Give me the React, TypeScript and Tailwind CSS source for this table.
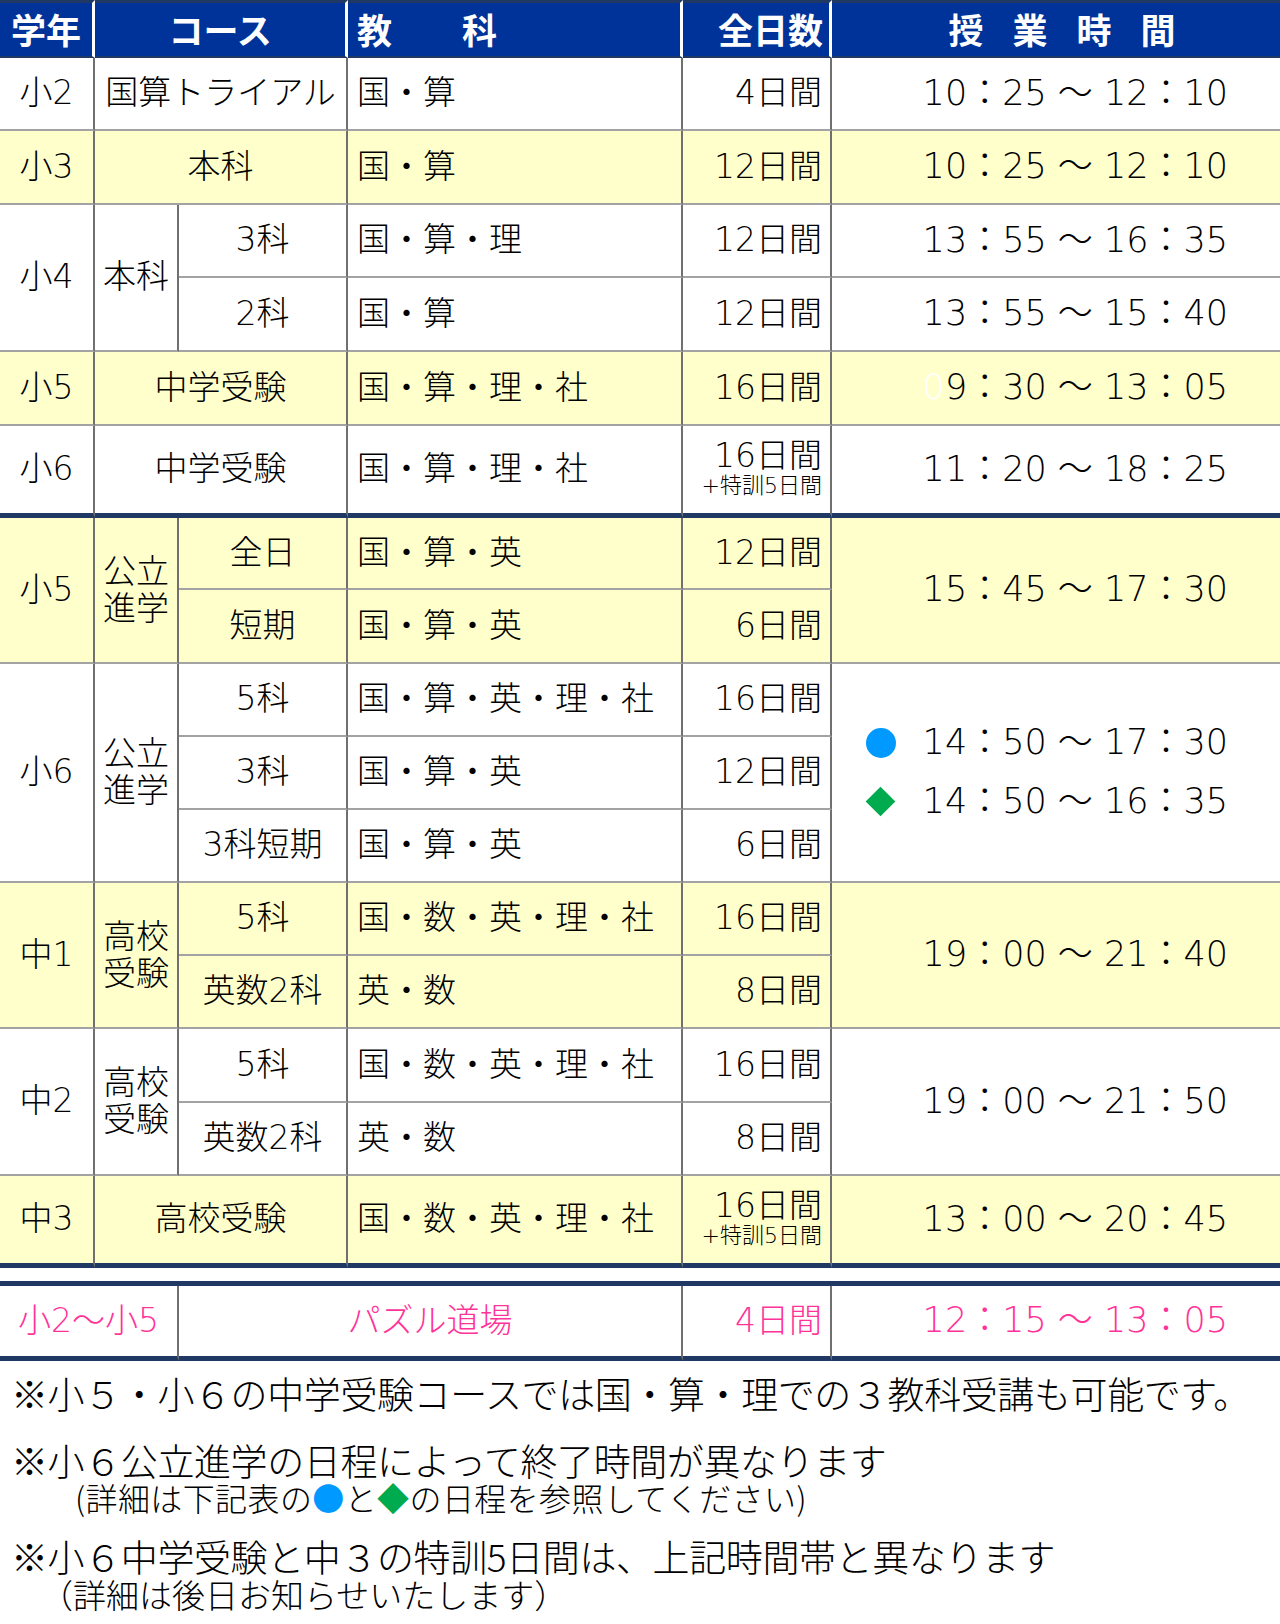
import type { ReactNode } from 'react'

type CellProps = {
  children?: ReactNode
  rowSpan?: number
  colSpan?: number
  align?: 'left' | 'center' | 'right' | 'time'
  last?: boolean
  thick?: boolean
  className?: string
}

function Cell({ children, rowSpan, colSpan, align = 'center', last, thick, className = '' }: CellProps) {
  const alignClass =
    align === 'left'
      ? 'text-left pl-[9px] pr-0'
      : align === 'right'
        ? 'text-right pr-[8px] pl-0'
        : align === 'time'
          ? 'text-right pr-[52px] pl-0'
          : 'text-center px-0'
  const rightClass = last ? '' : 'border-r-2 border-r-[#707070]'
  const bottomClass = thick ? 'border-b-[5px] border-b-[#1f3864]' : 'border-b-2 border-b-[#a3a3a3]'
  return (
    <td
      rowSpan={rowSpan}
      colSpan={colSpan}
      className={`${alignClass} ${rightClass} ${bottomClass} py-0 align-middle whitespace-nowrap ${className}`}
    >
      {children}
    </td>
  )
}

function Time({ text }: { text: string }) {
  return <span className="text-[35px]">{text}</span>
}

function Days({ main, extra }: { main: string; extra?: boolean }) {
  if (!extra) return <>{main}</>
  return (
    <div className="flex flex-col items-end leading-none">
      <span className="leading-[34px]">{main}</span>
      <span className="text-[22px] leading-[26px]">+特訓5日間</span>
    </div>
  )
}

function TwoLine({ a, b }: { a: string; b: string }) {
  return (
    <div className="flex flex-col items-center leading-[37px]">
      <span>{a}</span>
      <span>{b}</span>
    </div>
  )
}

export default function App() {
  const yellow = 'bg-[#ffffcc]'

  return (
    <div className="w-[1280px] h-[1624px] bg-white text-black font-['DejaVu_Sans','Noto_Sans_CJK_JP',sans-serif] font-light text-[33px] overflow-hidden">
      <table className="w-[1280px] table-fixed border-separate border-spacing-0">
        <colgroup>
          <col className="w-[95px]" />
          <col className="w-[84px]" />
          <col className="w-[169px]" />
          <col className="w-[335px]" />
          <col className="w-[149px]" />
          <col className="w-[448px]" />
        </colgroup>
        <thead>
          <tr className="h-[57px] bg-[#003399] text-white font-bold text-[35px] font-['Noto_Sans_CJK_JP',sans-serif]">
            <th className="border-t-[3px] border-t-[#1f3864] border-b-2 border-b-[#1f3864] border-r-[3px] border-r-white px-0 py-0 text-center">
              学年
            </th>
            <th colSpan={2} className="border-t-[3px] border-t-[#1f3864] border-b-2 border-b-[#1f3864] border-r-[3px] border-r-white px-0 py-0 text-center">
              コース
            </th>
            <th className="border-t-[3px] border-t-[#1f3864] border-b-2 border-b-[#1f3864] border-r-[3px] border-r-white pl-[9px] pr-0 py-0 text-left whitespace-pre">
              教　　科
            </th>
            <th className="border-t-[3px] border-t-[#1f3864] border-b-2 border-b-[#1f3864] border-r-[3px] border-r-white pr-[6px] pl-0 py-0 text-right">
              全日数
            </th>
            <th className="border-t-[3px] border-t-[#1f3864] border-b-2 border-b-[#1f3864] px-0 py-0">
              <div className="flex justify-center gap-[29px] pl-[12px]">
                <span>授</span>
                <span>業</span>
                <span>時</span>
                <span>間</span>
              </div>
            </th>
          </tr>
        </thead>
        <tbody>
          <tr className="h-[73px]">
            <Cell>小2</Cell>
            <Cell colSpan={2}>国算トライアル</Cell>
            <Cell align="left">国・算</Cell>
            <Cell align="right">4日間</Cell>
            <Cell align="time" last><Time text="10：25 ～ 12：10" /></Cell>
          </tr>
          <tr className={`h-[74px] ${yellow}`}>
            <Cell>小3</Cell>
            <Cell colSpan={2}>本科</Cell>
            <Cell align="left">国・算</Cell>
            <Cell align="right">12日間</Cell>
            <Cell align="time" last><Time text="10：25 ～ 12：10" /></Cell>
          </tr>
          <tr className="h-[73px]">
            <Cell rowSpan={2}>小4</Cell>
            <Cell rowSpan={2}>本科</Cell>
            <Cell>3科</Cell>
            <Cell align="left">国・算・理</Cell>
            <Cell align="right">12日間</Cell>
            <Cell align="time" last><Time text="13：55 ～ 16：35" /></Cell>
          </tr>
          <tr className="h-[74px]">
            <Cell>2科</Cell>
            <Cell align="left">国・算</Cell>
            <Cell align="right">12日間</Cell>
            <Cell align="time" last><Time text="13：55 ～ 15：40" /></Cell>
          </tr>
          <tr className={`h-[74px] ${yellow}`}>
            <Cell>小5</Cell>
            <Cell colSpan={2}>中学受験</Cell>
            <Cell align="left">国・算・理・社</Cell>
            <Cell align="right">16日間</Cell>
            <Cell align="time" last>
              <span className="text-[35px]">
                <span className="text-white">0</span>9：30 ～ 13：05
              </span>
            </Cell>
          </tr>
          <tr className="h-[92px]">
            <Cell thick>小6</Cell>
            <Cell colSpan={2} thick>中学受験</Cell>
            <Cell align="left" thick>国・算・理・社</Cell>
            <Cell align="right" thick><Days main="16日間" extra /></Cell>
            <Cell align="time" last thick><Time text="11：20 ～ 18：25" /></Cell>
          </tr>

          <tr className={`h-[72px] ${yellow}`}>
            <Cell rowSpan={2}>小5</Cell>
            <Cell rowSpan={2}><TwoLine a="公立" b="進学" /></Cell>
            <Cell>全日</Cell>
            <Cell align="left">国・算・英</Cell>
            <Cell align="right">12日間</Cell>
            <Cell align="time" rowSpan={2} last><Time text="15：45 ～ 17：30" /></Cell>
          </tr>
          <tr className={`h-[74px] ${yellow}`}>
            <Cell>短期</Cell>
            <Cell align="left">国・算・英</Cell>
            <Cell align="right">6日間</Cell>
          </tr>

          <tr className="h-[73px]">
            <Cell rowSpan={3}>小6</Cell>
            <Cell rowSpan={3}><TwoLine a="公立" b="進学" /></Cell>
            <Cell>5科</Cell>
            <Cell align="left">国・算・英・理・社</Cell>
            <Cell align="right">16日間</Cell>
            <Cell align="time" rowSpan={3} last>
              <div className="flex flex-col items-end gap-[24px] text-[35px] leading-[35px]">
                <div className="flex items-center">
                  <span className="mr-[27px] h-[30px] w-[30px] rounded-full bg-[#0099ff]" />
                  <span>14：50 ～ 17：30</span>
                </div>
                <div className="flex items-center">
                  <span className="mr-[32px] ml-[4px] h-[21px] w-[21px] rotate-45 bg-[#00aa4f]" />
                  <span>14：50 ～ 16：35</span>
                </div>
              </div>
            </Cell>
          </tr>
          <tr className="h-[73px]">
            <Cell>3科</Cell>
            <Cell align="left">国・算・英</Cell>
            <Cell align="right">12日間</Cell>
          </tr>
          <tr className="h-[73px]">
            <Cell>3科短期</Cell>
            <Cell align="left">国・算・英</Cell>
            <Cell align="right">6日間</Cell>
          </tr>

          <tr className={`h-[73px] ${yellow}`}>
            <Cell rowSpan={2}>中1</Cell>
            <Cell rowSpan={2}><TwoLine a="高校" b="受験" /></Cell>
            <Cell>5科</Cell>
            <Cell align="left">国・数・英・理・社</Cell>
            <Cell align="right">16日間</Cell>
            <Cell align="time" rowSpan={2} last><Time text="19：00 ～ 21：40" /></Cell>
          </tr>
          <tr className={`h-[73px] ${yellow}`}>
            <Cell>英数2科</Cell>
            <Cell align="left">英・数</Cell>
            <Cell align="right">8日間</Cell>
          </tr>

          <tr className="h-[74px]">
            <Cell rowSpan={2}>中2</Cell>
            <Cell rowSpan={2}><TwoLine a="高校" b="受験" /></Cell>
            <Cell>5科</Cell>
            <Cell align="left">国・数・英・理・社</Cell>
            <Cell align="right">16日間</Cell>
            <Cell align="time" rowSpan={2} last><Time text="19：00 ～ 21：50" /></Cell>
          </tr>
          <tr className="h-[73px]">
            <Cell>英数2科</Cell>
            <Cell align="left">英・数</Cell>
            <Cell align="right">8日間</Cell>
          </tr>

          <tr className={`h-[92px] ${yellow}`}>
            <Cell thick>中3</Cell>
            <Cell colSpan={2} thick>高校受験</Cell>
            <Cell align="left" thick>国・数・英・理・社</Cell>
            <Cell align="right" thick><Days main="16日間" extra /></Cell>
            <Cell align="time" last thick><Time text="13：00 ～ 20：45" /></Cell>
          </tr>

          <tr className="h-[18px]">
            <td colSpan={6} className="p-0 border-b-[5px] border-b-[#1f3864]" />
          </tr>

          <tr className="h-[75px] text-[#ff3399]">
            <Cell colSpan={2} thick>小2～小5</Cell>
            <Cell colSpan={2} thick>パズル道場</Cell>
            <Cell align="right" thick>4日間</Cell>
            <Cell align="time" last thick><Time text="12：15 ～ 13：05" /></Cell>
          </tr>
        </tbody>
      </table>

      <div className="pl-[11px] font-['Noto_Sans_CJK_JP',sans-serif] text-[37px] leading-[40px] tracking-[-0.4px]">
        <p className="mt-[12px]">※小５・小６の中学受験コースでは国・算・理での３教科受講も可能です。</p>
        <p className="mt-[27px]">※小６公立進学の日程によって終了時間が異なります</p>
        <p className="pl-[64px] text-[32px] leading-[34px] tracking-[0.4px]">
          (詳細は下記表の<span className="text-[#0099ff]">●</span>と<span className="text-[#00aa4f]">◆</span>の日程を参照してください)
        </p>
        <p className="mt-[22px]">※小６中学受験と中３の特訓5日間は、上記時間帯と異なります</p>
        <p className="pl-[29px] text-[33px] leading-[36px] tracking-[0px]">（詳細は後日お知らせいたします）</p>
      </div>
    </div>
  )
}
